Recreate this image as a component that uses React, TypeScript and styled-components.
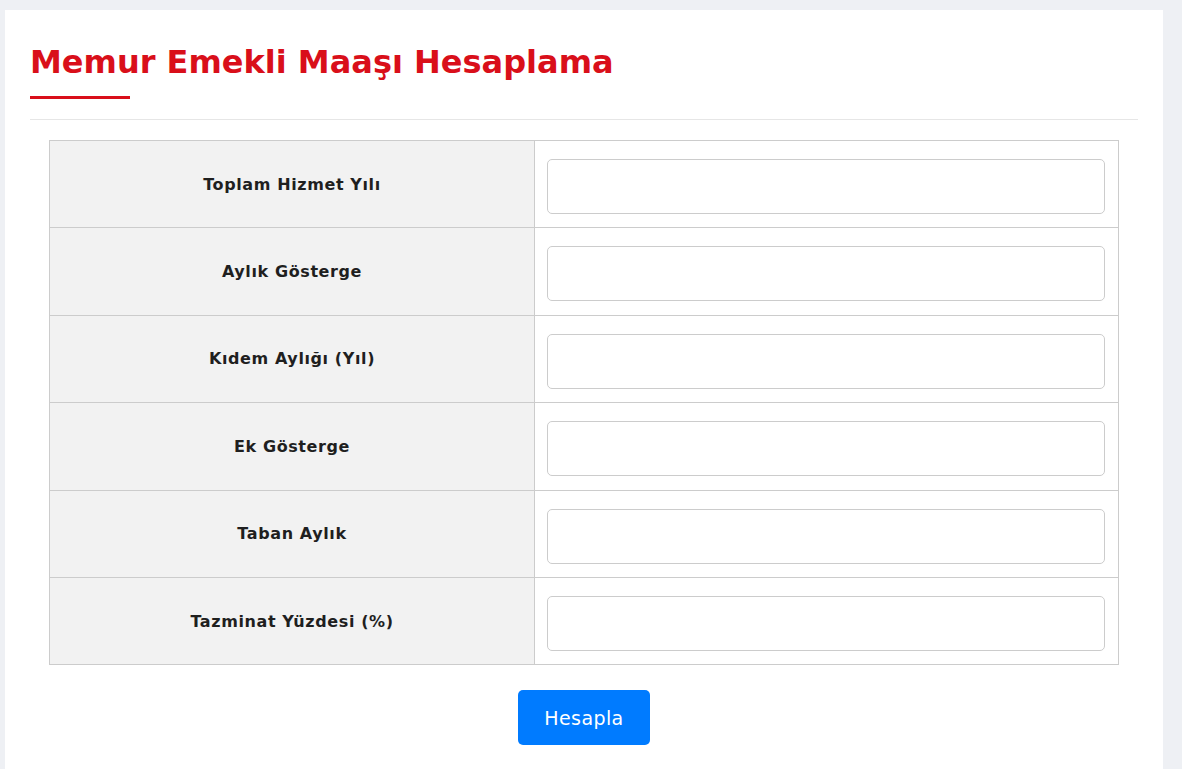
import React from 'react';
import styled, { createGlobalStyle } from 'styled-components';

const FONT = '"DejaVu Sans", "Noto Sans", sans-serif';

const fields = [
    'Toplam Hizmet Yılı',
    'Aylık Gösterge',
    'Kıdem Aylığı (Yıl)',
    'Ek Gösterge',
    'Taban Aylık',
    'Tazminat Yüzdesi (%)',
];

export default function App() {
    return (
        <>
            <GlobalStyle />
            <PageElement>
                <CardElement>
                    <HeaderElement>
                        <TitleElement>Memur Emekli Maaşı Hesaplama</TitleElement>
                        <AccentLineElement />
                    </HeaderElement>
                    <FormElement onSubmit={event => event.preventDefault()}>
                        <TableElement>
                            <tbody>
                                {fields.map(label => (
                                    <RowElement key={label}>
                                        <LabelCellElement>{label}</LabelCellElement>
                                        <InputCellElement>
                                            <InputElement type="text" aria-label={label} />
                                        </InputCellElement>
                                    </RowElement>
                                ))}
                            </tbody>
                        </TableElement>
                        <ActionsElement>
                            <ButtonElement type="submit">Hesapla</ButtonElement>
                        </ActionsElement>
                    </FormElement>
                </CardElement>
            </PageElement>
        </>
    );
}

const GlobalStyle = createGlobalStyle`
    * {
        box-sizing: border-box;
    }

    body {
        margin: 0;
        background: #eef0f4;
        font-family: ${FONT};
    }
`;

const PageElement = styled.div`
    padding: 10px 19px 0 5px;
    min-height: 769px;
`;

const CardElement = styled.div`
    background: #ffffff;
    padding: 28px 25px 40px;
    min-height: 759px;
`;

const HeaderElement = styled.div`
    border-bottom: 1px solid #e6e6e6;
    padding-bottom: 20px;
`;

const TitleElement = styled.h1`
    margin: 0;
    color: #d90f1a;
    font-family: ${FONT};
    font-size: 32px;
    font-weight: 600;
    line-height: 48px;
`;

const AccentLineElement = styled.div`
    width: 100px;
    height: 3px;
    margin-top: 10px;
    background: #d90f1a;
`;

const FormElement = styled.form`
    padding: 20px 19px 0;
`;

const TableElement = styled.table`
    width: 100%;
    border-collapse: collapse;
    border: 1px solid #cccccc;
`;

const RowElement = styled.tr`
    border-top: 1px solid #cccccc;
`;

const LabelCellElement = styled.td`
    width: 485px;
    background: #f2f2f2;
    border-right: 1px solid #cccccc;
    color: #1f1f1f;
    font-family: ${FONT};
    font-size: 16px;
    font-weight: 700;
    letter-spacing: 0.6px;
    text-align: center;
    vertical-align: middle;
`;

const InputCellElement = styled.td`
    padding: 18px 13px 13.4px 12px;
    background: #ffffff;
`;

const InputElement = styled.input`
    display: block;
    width: 100%;
    height: 55px;
    padding: 6px 12px;
    border: 1px solid #cccccc;
    border-radius: 5px;
    font-family: ${FONT};
    font-size: 16px;
    outline: none;
`;

const ActionsElement = styled.div`
    display: flex;
    justify-content: center;
    padding-top: 25px;
`;

const ButtonElement = styled.button`
    width: 132px;
    height: 55px;
    border: none;
    border-radius: 5px;
    background: #007bff;
    color: #ffffff;
    font-family: ${FONT};
    font-size: 19px;
    font-weight: 400;
    letter-spacing: 0.4px;
    cursor: pointer;
`;
